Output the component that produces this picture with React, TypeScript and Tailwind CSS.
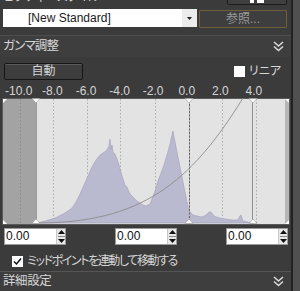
import React from "react";

const hist = [
  [37, 224], [45, 222], [55, 219], [65, 214], [72, 209], [76, 203], [80, 195], [84, 186], [88, 177], [92, 168], [96, 161], [100, 156], [103, 154], [106, 152], [108, 149], [109, 147], [110, 140], [111, 150], [112, 146], [113, 153], [115, 155], [117, 160], [119, 166], [121, 173], [123, 180], [125, 186], [127, 188], [129, 193], [131, 196], [134, 199], [137, 202], [140, 204], [143, 206], [146, 207], [148, 206], [150, 205], [152, 200], [155, 192], [158, 182], [161, 174], [164, 166], [167, 156], [170, 145], [172, 136], [173, 132], [174, 138], [176, 148], [178, 158], [180, 168], [182, 178], [184, 188], [186, 198], [188, 208], [190, 213], [193, 216], [197, 217], [202, 218], [206, 216], [209, 213], [211, 213], [213, 216], [216, 218], [220, 219], [225, 220], [232, 221], [238, 221], [240, 217], [241, 216], [243, 222], [248, 223], [252, 224],
];

const Chevrons = () => (
  <svg width="11" height="11" viewBox="0 0 11 11">
    <polyline points="1,1 5.5,5 10,1" fill="none" stroke="#d8d8d8" strokeWidth="1.6" />
    <polyline points="1,5.5 5.5,9.5 10,5.5" fill="none" stroke="#d8d8d8" strokeWidth="1.6" />
  </svg>
);

const Spinner = () => (
  <div className="w-[9px] h-full flex flex-col items-center justify-center gap-[2px] bg-[#e8e8e8] border-l border-[#c8c8c8]">
    <svg width="7" height="4" viewBox="0 0 7 4"><polygon points="0,4 7,4 3.5,0" fill="#111" /></svg>
    <div className="w-[7px] h-px bg-[#888]" />
    <svg width="7" height="4" viewBox="0 0 7 4"><polygon points="0,0 7,0 3.5,4" fill="#111" /></svg>
  </div>
);

const NumInput = () => (
  <div className="w-[62px] h-[17px] bg-white flex items-stretch border border-[#9a9a9a]">
    <div className="flex-1 text-[12px] leading-[15px] text-[#111] pl-[1px]">0.00</div>
    <Spinner />
  </div>
);

const Histogram = () => {
  const dotted = [20, 53, 87, 120, 155, 189, 222, 256];
  const pts = hist.map((p) => p.join(",")).join(" ");
  const tri = (x: number) => (
    <g key={x}>
      <polygon points={`${x - 4},99.5 ${x + 4},99.5 ${x},104`} fill="#fff" stroke="#999" strokeWidth="0.6" />
      <polygon points={`${x - 4},224.5 ${x + 4},224.5 ${x},220`} fill="#fff" stroke="#999" strokeWidth="0.6" />
    </g>
  );
  return (
    <svg width="288" height="127" viewBox="2 99 288 127" className="block">
      <rect x="2" y="99" width="288" height="127" fill="#5a5a5a" />
      <rect x="3" y="100" width="286" height="125" fill="#e3e3e3" />
      <rect x="3" y="100" width="33" height="125" fill="#a3a3a3" />
      <rect x="285" y="100" width="4" height="125" fill="#b6b6b6" />
      {dotted.map((x) => (
        <line key={x} x1={x + 0.5} y1="100" x2={x + 0.5} y2="225" stroke={x < 36 ? "#8a8a8a" : "#acacac"} strokeWidth="1" strokeDasharray="1.5 2" />
      ))}
      <polygon points={pts} fill="#b9b9d0" stroke="#a0a0b8" strokeWidth="0.6" />
      <line x1="189.5" y1="100" x2="189.5" y2="225" stroke="#606060" strokeWidth="1" />
      <line x1="189.5" y1="100" x2="189.5" y2="225" stroke="#b8b8b8" strokeWidth="1" strokeDasharray="1.5 2" />
      <line x1="252.5" y1="100" x2="252.5" y2="225" stroke="#8e8e8e" strokeWidth="1" />
      <line x1="36.5" y1="100" x2="36.5" y2="225" stroke="#9c9c9c" strokeWidth="1" />
      <path d="M37,224 C140,224 190,185 243,99" fill="none" stroke="#8c8c8c" strokeWidth="0.9" />
      {[36, 189, 253].map(tri)}
      <polygon points="3,100 7,100 3,104" fill="#fff" />
      <polygon points="289,100 285,100 289,104" fill="#fff" />
      <polygon points="3,225 7,225 3,221" fill="#fff" />
      <polygon points="289,225 285,225 289,221" fill="#fff" />
    </svg>
  );
};

export default function App() {
  const labels = ["-10.0", "-8.0", "-6.0", "-4.0", "-2.0", "0.0", "2.0", "4.0"];
  return (
    <div className="w-[300px] h-[291px] overflow-hidden bg-[#3b3b3b] flex font-['Liberation_Sans','Noto_Sans_CJK_JP',sans-serif] [font-feature-settings:'palt'] text-[#d6d6d6]">
      <div className="w-[291px] flex flex-col">
        {/* clipped top row */}
        <div className="h-[6px] overflow-hidden relative flex items-end">
          <div className="absolute left-[3px] bottom-[2px] text-[12px] leading-[14px] whitespace-nowrap">ピクチャースタイル</div>
          <div className="absolute left-[227px] bottom-[1px] w-[60px] h-[14px] border border-[#1c1c1c] bg-[#3f3f3f] rounded-[2px] flex items-end justify-center gap-[3px] pb-[1px]">
            <div className="w-[4px] h-[3px] bg-white" />
            <div className="w-[7px] h-[3px] bg-white" />
          </div>
        </div>
        {/* dropdown row */}
        <div className="mt-[3px] h-[19px] flex items-start">
          <div className="ml-[3px] w-[194px] h-[18px] bg-white flex items-center">
            <div className="flex-1 pl-[25px] text-[12px] text-[#1a1a1a] leading-[18px]">[New Standard]</div>
            <div className="w-[15px] h-[18px] bg-[#ececec] flex items-center justify-center">
              <svg width="5" height="3" viewBox="0 0 5 3"><polygon points="0,0 5,0 2.5,3" fill="#222" /></svg>
            </div>
          </div>
          <div className="ml-[2px] mt-[1px] w-[88px] h-[18px] border border-[#6f5e3c] bg-[#3e3e3e] rounded-[1px] flex items-center justify-center text-[12px] text-[#9a9a9a] leading-none">
            参照...
          </div>
        </div>
        {/* header */}
        <div className="mt-[7px] h-[22px] border-t border-[#4e4e4e] bg-[#3e3e3e] flex items-center justify-between pl-[3px] pr-[7px]">
          <span className="text-[12.5px] leading-none tracking-[-0.8px]">ガンマ調整</span>
          <Chevrons />
        </div>
        {/* auto row */}
        <div className="mt-[5px] h-[18px] flex items-center justify-between pl-[4px] pr-[10px]">
          <div className="w-[79px] h-[17px] border border-[#161616] rounded-[2px] bg-[#3d3d3d] shadow-[inset_0_1px_0_#5a5a5a] flex items-center justify-center text-[12px] leading-none">
            自動
          </div>
          <div className="flex items-center gap-[4px]">
            <div className="w-[11px] h-[11px] bg-white" />
            <span className="text-[12px] leading-none">リニア</span>
          </div>
        </div>
        {/* labels */}
        <div className="mt-[5px] h-[12px] flex pl-[2px] text-[12px] leading-[12px]">
          {labels.map((l) => (
            <div key={l} className="w-[33.6px] text-center whitespace-nowrap">{l}</div>
          ))}
        </div>
        {/* histogram */}
        <div className="mt-[1px] ml-[2px]">
          <Histogram />
        </div>
        {/* inputs */}
        <div className="mt-[3px] flex justify-between pl-[4px] pr-[3px]">
          <NumInput />
          <NumInput />
          <NumInput />
        </div>
        {/* checkbox */}
        <div className="mt-[10px] h-[12px] flex items-center pl-[12px] gap-[4px]">
          <div className="w-[11px] h-[11px] bg-white flex items-center justify-center">
            <svg width="9" height="9" viewBox="0 0 9 9"><polyline points="1,4.5 3.5,7 8,1.5" fill="none" stroke="#111" strokeWidth="1.5" /></svg>
          </div>
          <span className="text-[12px] leading-none tracking-[-1.4px]">ミッドポイントを連動して移動する</span>
        </div>
        {/* footer header */}
        <div className="mt-[4px] h-[20px] border-t border-[#555] bg-[#3e3e3e] flex items-center justify-between pl-[3px] pr-[7px]">
          <span className="text-[12.5px] leading-none tracking-[-0.4px]">詳細設定</span>
          <Chevrons />
        </div>
      </div>
      <div className="w-[9px] border-l-2 border-[#222] bg-[#505050]" />
    </div>
  );
}
